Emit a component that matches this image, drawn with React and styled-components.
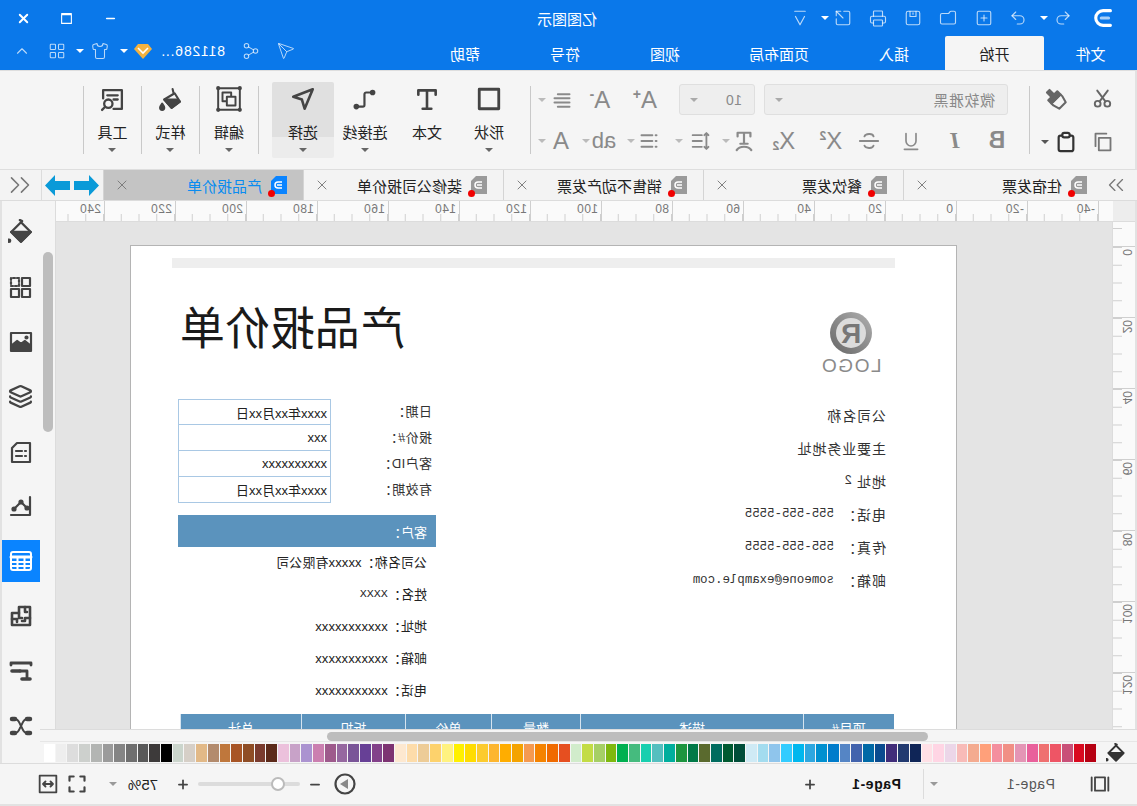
import React from "react";
import styled, { createGlobalStyle } from "styled-components";
import {
  Undo2, Redo2, SquarePlus, Folder, Printer, SquareArrowOutUpRight, Send, Share2, Shirt,
  LayoutGrid, ChevronUp, ChevronsLeft, ChevronsRight, X, Minus, Plus, Layers,
} from "lucide-react";

// la captura esta reflejada: todo se dibuja normal y el Frame voltea la pagina
const azul = "#0a78ea";
const fondoBarra = "#f5f5f5";
const azulTabla = "#5b93bd";
const sans = `"Liberation Sans", "Noto Sans CJK SC", sans-serif`;
const mono = `"Liberation Mono", "Noto Sans CJK SC", monospace`;

const Global = createGlobalStyle`
  html, body { margin: 0; padding: 0; background: #e2e2e2; overflow: hidden; }
  * { box-sizing: border-box; }
`;

const Frame = styled.div`
  width: 1137px;
  height: 806px;
  display: flex;
  flex-direction: column;
  overflow: hidden;
  transform: scaleX(-1);
  font-family: ${sans};
  color: #222;
  background: #e2e2e2;
`;

const Slot = styled.div`
  flex: none;
  width: ${p => p.$w || 18}px;
  margin-left: ${p => p.$ml || 0}px;
  display: flex;
  align-items: center;
  justify-content: center;
  color: ${p => p.$c || "inherit"};
`;

const Caret = styled.i`
  display: block;
  width: 0;
  height: 0;
  border-left: 4px solid transparent;
  border-right: 4px solid transparent;
  border-top: 4px solid ${p => p.$c || "#777"};
`;

const TitleBar = styled.div`
  height: 36px;
  flex: none;
  display: flex;
  align-items: center;
  background: ${azul};
  color: rgba(255,255,255,.72);
`;
const AppName = styled.div`
  width: 80px;
  margin-left: 184px;
  color: #fff;
  font-size: 15px;
  text-align: center;
  white-space: nowrap;
`;

const MenuBar = styled.div`
  height: 34px;
  flex: none;
  display: flex;
  align-items: center;
  background: ${azul};
  color: rgba(255,255,255,.72);
`;
const MenuTab = styled.div`
  width: ${p => p.$w}px;
  height: 34px;
  flex: none;
  display: flex;
  align-items: center;
  justify-content: center;
  font-size: 15px;
  color: ${p => (p.$active ? "#222" : "#fff")};
  background: ${p => (p.$active ? fondoBarra : "transparent")};
  border-radius: 2px 2px 0 0;
`;
const MenuTools = styled.div`
  display: flex;
  align-items: center;
  margin-bottom: 5px;
`;
const UserName = styled.div`
  width: 65px;
  margin-left: 17px;
  font-size: 14px;
  letter-spacing: .8px;
  color: #fff;
  white-space: nowrap;
`;

const Ribbon = styled.div`
  height: 100px;
  flex: none;
  display: flex;
  align-items: center;
  background: ${fondoBarra};
  border-left: 2px solid #e2e2e2;
  border-top: 1px solid #dedede;
  border-bottom: 1px solid #dedede;
`;
const Divider = styled.div`
  width: 1px;
  height: 68px;
  flex: none;
  background: #c9c9c9;
  margin-left: ${p => p.$ml || 0}px;
`;
const Clipboard = styled.div`
  width: 105px;
  flex: none;
  display: grid;
  grid-template-columns: 40px 1fr;
  grid-auto-rows: 31px;
  row-gap: 12px;
  padding-left: 12px;
  align-items: center;
  justify-items: center;
`;
const PasteCell = styled.div`
  display: flex;
  align-items: center;
  gap: 5px;
  margin-left: -6px;
`;
const FontGroup = styled.div`
  width: 498px;
  flex: none;
  padding-left: 21px;
  display: flex;
  flex-direction: column;
  gap: 10px;
`;
const FontRow = styled.div`
  height: 31px;
  display: flex;
  align-items: center;
  color: #8a8a8a;
`;
const Select = styled.div`
  width: ${p => p.$w}px;
  height: 31px;
  flex: none;
  margin-left: ${p => p.$ml || 0}px;
  display: flex;
  align-items: center;
  justify-content: space-between;
  padding: 0 10px 0 12px;
  font-size: ${p => p.$s || 15}px;
  letter-spacing: .5px;
  color: #8a8a8a;
  background: #eeeeee;
  border: 1px solid #dfdfdf;
  border-radius: 3px;
`;
const Glyph = styled.span`
  font-family: ${p => (p.$serif ? `"Liberation Serif", serif` : sans)};
  font-size: ${p => p.$s || 24}px;
  font-weight: ${p => (p.$b ? 700 : 400)};
  font-style: ${p => (p.$i ? "italic" : "normal")};
  line-height: 1;
  color: #8a8a8a;
`;
const Mark = styled.span`
  font-size: ${p => p.$s || 12}px;
  font-weight: 700;
  line-height: 1;
  margin-bottom: ${p => p.$up || 0}px;
  margin-top: ${p => p.$down || 0}px;
  color: #8a8a8a;
`;
const BigGroup = styled.div`
  display: flex;
  flex: none;
  margin-left: ${p => p.$ml || 0}px;
`;
const BigTool = styled.div`
  width: ${p => p.$w || 62}px;
  height: 76px;
  flex: none;
  display: flex;
  flex-direction: column;
  align-items: center;
  padding-top: 4px;
  border-radius: 2px;
  background: ${p => (p.$active ? "linear-gradient(#e0e0e0 55px, #ececec 55px)" : "transparent")};
`;
const BigIcon = styled.div`
  height: 26px;
  display: flex;
  align-items: center;
  justify-content: center;
  color: #444;
`;
const BigLabel = styled.div`
  margin-top: 12px;
  font-size: 15px;
  line-height: 18px;
  color: #222;
  white-space: nowrap;
`;
const BigCaret = styled.div`
  margin-top: 6px;
`;

const DocTabs = styled.div`
  height: 31px;
  flex: none;
  display: flex;
  align-items: stretch;
  background: #f3f3f3;
  border-bottom: 1px solid #dcdcdc;
`;
const DocEdge = styled.div`
  width: ${p => p.$w}px;
  flex: none;
  display: flex;
  align-items: center;
  justify-content: center;
  gap: 4px;
  padding-left: ${p => p.$pl || 0}px;
  color: #777;
  border-left: ${p => (p.$line ? "1px solid #dcdcdc" : "none")};
`;
const DocTab = styled.div`
  width: 200px;
  flex: none;
  display: flex;
  align-items: center;
  padding: 0 10px 0 16px;
  font-size: 15px;
  border-right: 1px solid #d4d4d4;
  color: ${p => (p.$active ? "#0a8cf0" : "#222")};
  background: ${p => (p.$active ? "#c4c4c4" : "transparent")};
`;
const DocIcon = styled.div`
  position: relative;
  width: 16px;
  height: 18px;
  flex: none;
  margin-right: 9px;
`;
const RedDot = styled.i`
  position: absolute;
  right: -3px;
  bottom: -3px;
  width: 7px;
  height: 7px;
  border-radius: 50%;
  background: #f00000;
`;
const CloseMark = styled.div`
  margin-left: auto;
  display: flex;
  color: #777;
`;

const Workspace = styled.div`
  flex: 1;
  min-height: 0;
  display: flex;
`;
const Center = styled.div`
  width: 1097px;
  flex: none;
  display: flex;
  flex-direction: column;
`;
const EditorRow = styled.div`
  flex: 1;
  min-height: 0;
  display: flex;
`;
const Editor = styled.div`
  width: 1081px;
  flex: none;
  display: grid;
  grid-template-columns: 22px 1fr;
  grid-template-rows: 21px 1fr;
  grid-template-areas: "corner hruler" "vruler canvas";
  padding-left: 2px;
`;
const Corner = styled.div`
  grid-area: corner;
  background: #ededed;
  border-bottom: 1px solid #dcdcdc;
`;
const HRuler = styled.div`
  grid-area: hruler;
  display: flex;
  overflow: hidden;
  padding-left: 14px;
  background: #fafafa;
  border-bottom: 1px solid #dcdcdc;
`;
const HMark = styled.div`
  width: 71px;
  flex: none;
  padding: 1px 0 0 3px;
  font-size: 12px;
  letter-spacing: .4px;
  line-height: 14px;
  color: #777;
  border-left: 1px solid #cfcfcf;
  background: linear-gradient(to right, #cfcfcf 1px, transparent 1px) left bottom / 17.75px 7px repeat-x;
`;
const VRuler = styled.div`
  grid-area: vruler;
  overflow: hidden;
  background: #fafafa;
`;
const VPad = styled.div`
  height: 24px;
  background: linear-gradient(#cfcfcf, #cfcfcf) right 6px / 9px 1px no-repeat;
`;
const VMark = styled.div`
  height: 71px;
  padding: 2px 0 0 3px;
  border-top: 1px solid #cfcfcf;
  background: linear-gradient(to bottom, #cfcfcf 1px, transparent 1px) right top / 9px 17.75px repeat-y;
`;
const VLabel = styled.div`
  writing-mode: vertical-rl;
  transform: rotate(180deg);
  font-size: 12px;
  line-height: 10px;
  color: #777;
`;
const Canvas = styled.div`
  grid-area: canvas;
  overflow: hidden;
  background: #e4e4e4;
  border-left: 1px solid #dcdcdc;
`;
const Sheet = styled.div`
  width: 827px;
  height: 900px;
  margin: 23px 0 0 155px;
  background: #fff;
  border: 1px solid #b4b4b4;
`;
const SheetBand = styled.div`
  height: 10px;
  margin: 12px 41px 0 61px;
  background: #eeeeee;
`;
const SheetColumns = styled.div`
  display: grid;
  grid-template-columns: 450px 258px;
  padding-left: 70px;
`;
const LogoBox = styled.div`
  margin: 42px 0 0 6px;
  width: 58px;
  display: flex;
  flex-direction: column;
  align-items: center;
`;
const LogoWord = styled.div`
  font-size: 19px;
  line-height: 20px;
  letter-spacing: 1.5px;
  color: #8a8a8a;
`;
const CompanyList = styled.div`
  margin-top: 22px;
  display: flex;
  flex-direction: column;
`;
const CompanyLine = styled.div`
  height: 33px;
  display: flex;
  align-items: center;
  font-size: 14px;
  letter-spacing: .9px;
  color: #333;
  white-space: nowrap;
`;
const CompanyKey = styled.span`
  width: ${p => p.$w || 52}px;
  flex: none;
`;
const MonoText = styled.span`
  font-family: ${mono};
  font-size: 12.4px;
  letter-spacing: 0;
`;
const BigX = styled.span`
  font-family: ${mono};
  font-size: 11.5px;
`;
const DocTitle = styled.h1`
  margin: 25px 0 0 31px;
  font-family: "Noto Sans CJK SC", sans-serif;
  font-size: 45px;
  line-height: 65px;
  font-weight: 400;
  color: #1a1a1a;
  white-space: nowrap;
`;
const InfoGrid = styled.div`
  margin-top: 41px;
  display: grid;
  grid-template-columns: 105px 153px;
  grid-auto-rows: 26px;
  font-size: 13px;
`;
const InfoKey = styled.div`
  padding: 0 0 4px 4px;
  display: flex;
  align-items: center;
  color: #333;
  letter-spacing: .4px;
`;
const InfoValue = styled.div`
  display: flex;
  align-items: center;
  padding-left: 3px;
  color: #222;
  border: 1px solid #a9c8e4;
  border-top: ${p => (p.$first ? "1px solid #a9c8e4" : "none")};
  background: #fff;
`;
const CustomerHead = styled.div`
  height: 32px;
  margin: 12px 0 -2px;
  padding-left: 9px;
  display: flex;
  align-items: center;
  font-size: 13px;
  color: #fff;
  background: ${azulTabla};
`;
const CustomerLine = styled.div`
  height: 32px;
  padding-left: 9px;
  display: flex;
  align-items: center;
  font-size: 13px;
  letter-spacing: .1px;
  color: #222;
  white-space: nowrap;
`;
const PriceTable = styled.div`
  margin: 9px 0 0 62px;
  width: 714px;
  display: grid;
  grid-template-columns: 91px 223px 89px 86px 104px 121px;
  height: 30px;
  background: ${azulTabla};
`;
const PriceHead = styled.div`
  border-right: 1px solid #d6e4ef;
  color: #fff;
  font-size: 13px;
  text-align: center;
  line-height: 30px;
`;

const VScroll = styled.div`
  width: 16px;
  flex: none;
  background: ${fondoBarra};
  border-left: 1px solid #dcdcdc;
  padding: 51px 0 0 2px;
`;
const VThumb = styled.div`
  width: 10px;
  height: 180px;
  border-radius: 5px;
  background: #bdbdbd;
`;
const HScroll = styled.div`
  height: 13px;
  flex: none;
  padding: 2px 0 0 209px;
  background: ${fondoBarra};
  border-top: 1px solid #dcdcdc;
  border-bottom: 1px solid #e6e6e6;
`;
const HThumb = styled.div`
  width: 601px;
  height: 9px;
  border-radius: 5px;
  background: #bdbdbd;
`;
const PaletteRow = styled.div`
  height: 21px;
  flex: none;
  display: flex;
  align-items: center;
  background: ${fondoBarra};
`;
const FillCell = styled.div`
  width: 41px;
  flex: none;
  display: flex;
  justify-content: center;
  color: #333;
`;
const Palette = styled.div`
  width: 1052px;
  flex: none;
  display: grid;
  grid-template-columns: repeat(90, 1fr);
  column-gap: 1px;
  height: 18px;
`;
const Swatch = styled.div`
  background: ${p => p.$c};
`;
const Sidebar = styled.div`
  width: 38px;
  flex: none;
  display: flex;
  flex-direction: column;
  gap: 12.9px;
  padding-top: 10px;
  margin-right: 2px;
  background: ${fondoBarra};
`;
const SideBtn = styled.div`
  height: 42px;
  flex: none;
  display: flex;
  align-items: center;
  justify-content: center;
  color: ${p => (p.$active ? "#fff" : "#444")};
  background: ${p => (p.$active ? "#0a84ff" : "transparent")};
`;

const StatusBar = styled.div`
  height: 41px;
  flex: none;
  display: flex;
  align-items: center;
  margin-bottom: 2px;
  color: #444;
  background: ${fondoBarra};
  border-top: 1px solid #dcdcdc;
`;
const PageName = styled.div`
  width: ${p => p.$w}px;
  flex: none;
  margin-left: ${p => p.$ml}px;
  font-size: 14px;
  letter-spacing: .6px;
  font-weight: ${p => (p.$b ? 700 : 400)};
  color: ${p => (p.$b ? "#111" : "#555")};
  white-space: nowrap;
`;
const StatusRule = styled.div`
  width: 1px;
  height: 30px;
  flex: none;
  margin-left: 6px;
  background: #dcdcdc;
`;
const Slider = styled.div`
  position: relative;
  width: 102px;
  height: 4px;
  flex: none;
  margin-left: 8px;
  border-radius: 2px;
  background: #dcdcdc;
`;
const SliderThumb = styled.i`
  position: absolute;
  left: 15px;
  top: -5px;
  width: 14px;
  height: 14px;
  border-radius: 50%;
  background: #fff;
  border: 2px solid #bbb;
`;
const Percent = styled.div`
  width: 31px;
  flex: none;
  margin-left: 18px;
  font-size: 15px;
  white-space: nowrap;
  color: #222;
`;

const Svg = ({ s = 24, children, sw = 2, w, fill = "none" }) => (
  <svg width={w || s} height={s} viewBox="0 0 24 24" fill={fill} stroke="currentColor"
    strokeWidth={sw} strokeLinecap="round" strokeLinejoin="round">
    {children}
  </svg>
);

const Logo = () => (
  <Svg s={22} sw={3.4}>
    <path d="M5 4h8a8 8 0 0 1 0 16H5" stroke="#fff" />
    <path d="M7 12h8" stroke="#a9d0f8" />
  </Svg>
);
const CustomIcon = () => (
  <Svg s={18} sw={1.6}><path d="M5 3h14M6 10l6 11 6-11" /></Svg>
);
const SaveIcon = () => (
  <Svg s={20} sw={1.5}>
    <rect x="3" y="3" width="18" height="18" rx="2.5" />
    <path d="M8 3v7h8V3M12 5v2" />
  </Svg>
);
const Diamond = () => (
  <svg width="18" height="16" viewBox="0 0 18 16">
    <path d="M4 1h10l4 5-9 10L0 6z" fill="#f4b23f" />
    <path d="M4 5l5 5 5-5" fill="none" stroke="#fff" strokeWidth="1.6" />
  </svg>
);
const Scissors = () => (
  <Svg s={21} sw={2.2}>
    <circle cx="6.5" cy="18" r="3.3" /><circle cx="17.5" cy="18" r="3.3" />
    <path d="M8.5 15.5L18 3M15.5 15.5L6 3" />
  </Svg>
);
const Painter = () => (
  <Svg s={22} sw={2.2}>
    <g transform="rotate(45 12 12)">
      <rect x="10" y="0" width="4" height="7" fill="currentColor" />
      <rect x="5" y="7" width="14" height="5" fill="currentColor" />
      <path d="M5 12h14v3l-2 7H7l-2-7z" />
    </g>
  </Svg>
);
const CopyIcon = () => (
  <Svg s={20} sw={2.2}>
    <rect x="3" y="7" width="14" height="15" />
    <path d="M8 2h13v15" />
  </Svg>
);
const Paste = () => (
  <Svg s={22} sw={2.4}>
    <rect x="4" y="5" width="16" height="17" rx="2" />
    <rect x="8" y="2" width="8" height="5" rx="2" fill="#f5f5f5" />
  </Svg>
);
const AlignIcon = () => (
  <Svg s={20} sw={2.4}><path d="M3 5h14M3 10h18M3 15h18M3 20h14" /></Svg>
);
const LineSpacing = () => (
  <Svg s={20} w={26} sw={2.2}><path d="M3 5l2.5-2.5L8 5M5.5 3v18M3 19l2.5 2.5L8 19M11 5h11M11 12h11M11 19h11" /></Svg>
);
const ListIcon = () => (
  <Svg s={20} sw={2.4}><path d="M3 5h1M3 12h1M3 19h1M8 5h13M8 12h13M8 19h13" /></Svg>
);
const TArc = () => (
  <Svg s={22} sw={2.4}><path d="M5 7V3h14v4M12 3v12M8 15h8M4 22c3-5 13-5 16 0" /></Svg>
);
const Strike = () => (
  <Svg s={22} sw={2}><path d="M17 7c-1-3-9-4-10 0M7 17c1 4 9 3 10 0M2 12h20" /></Svg>
);
const ShapeIcon = () => (
  <Svg s={26} sw={2.6}><rect x="3" y="3" width="18" height="18" /></Svg>
);
const TextIcon = () => (
  <Svg s={26} sw={2.4}><path d="M4 8V4h16v4M12 4v17M8 21h8" /></Svg>
);
const ConnectorIcon = () => (
  <Svg s={26} sw={2}>
    <path d="M19 19h-5a1.5 1.5 0 0 1-1.5-1.5v-10A1.5 1.5 0 0 0 11 6H8" />
    <circle cx="20" cy="19" r="1.6" fill="currentColor" />
    <circle cx="5" cy="6" r="1.6" fill="currentColor" />
  </Svg>
);
const PointerIcon = () => (
  <Svg s={26} sw={2.4}><path d="M3 3l18 7-8 2.5L10.500 21z" /></Svg>
);
const EditIcon = () => (
  <Svg s={26} sw={1.8}>
    <rect x="2" y="2" width="20" height="20" />
    <rect x="10" y="6" width="8" height="8" />
    <rect x="6" y="10" width="8" height="8" fill="#f5f5f5" />
    <g fill="#f5f5f5"><circle cx="2" cy="2" r="1" /><circle cx="22" cy="2" r="1" /><circle cx="2" cy="22" r="1" /><circle cx="22" cy="22" r="1" /></g>
  </Svg>
);
const StyleIcon = () => (
  <Svg s={25} sw={2}>
    <path d="M10 2l-1 4M8 6l-5 8 8 6 7-8z" />
    <path d="M3 14l8 6 7-8H6z" fill="currentColor" />
    <path d="M20 16c1.500 2 2 3 2 4a2 2 0 0 1-4 0c0-1 .5-2 2-4z" fill="currentColor" />
  </Svg>
);
const ToolIcon = () => (
  <Svg s={25} sw={2.2}>
    <path d="M11 21H3V3h18v8" />
    <path d="M7 8h10M7 12h4" />
    <circle cx="16" cy="16" r="4" />
    <path d="M19 19l3 3" />
  </Svg>
);
const NavArrow = ({ dir }) => (
  <svg width="25" height="21" viewBox="0 0 25 21" fill="#0a9ad8">
    <path d={dir === "left" ? "M0 10.500L10 0v6h15v9H10v6z" : "M25 10.500L15 0v6H0v9h15v6z"} />
  </svg>
);
const PageGlyph = ({ active }) => (
  <svg width="16" height="18" viewBox="0 0 16 18">
    <path d="M0 0h11l5 5v13H0z" fill={active ? "#0a84ff" : "#9a9a9a"} />
    <path d="M5 6h4a3 3 0 0 1 0 6H5M5 9h5" fill="none" stroke="#fff" strokeWidth="1.5" />
  </svg>
);
const BucketSide = ({ s = 26 }) => (
  <Svg s={s} sw={2.2}>
    <path d="M12 3l9 9-9 9-9-9z" />
    <path d="M3 12h18l-9 9z" fill="currentColor" />
    <path d="M11 2l2-1" />
    <circle cx="23" cy="20" r="1" fill="currentColor" />
  </Svg>
);
const ShapesSide = () => (
  <Svg s={24} sw={2.2}>
    <rect x="3" y="3" width="8" height="8" />
    <rect x="14" y="3" width="8" height="8" strokeDasharray="2 2" />
    <rect x="3" y="14" width="8" height="8" />
    <rect x="14" y="14" width="8" height="8" />
  </Svg>
);
const ImageSide = () => (
  <Svg s={24} sw={2.2}>
    <rect x="2" y="3" width="20" height="18" />
    <path d="M3 20v-5l5-4 4 3 4-3 5 4v5z" fill="currentColor" />
    <circle cx="6.500" cy="7.500" r="1" fill="currentColor" />
  </Svg>
);
const NoteSide = () => (
  <Svg s={24} sw={2.2}>
    <path d="M3 3h13l5 5v14H3z" />
    <path d="M7 11h1M11 11h6M7 16h1M11 16h6" />
  </Svg>
);
const ChartSide = () => (
  <Svg s={24} sw={2.2}>
    <path d="M3 3v18h19" />
    <path d="M6 14l6-6 7 7" />
    <circle cx="12" cy="8" r="1.500" fill="currentColor" />
    <circle cx="19" cy="15" r="1.500" fill="currentColor" />
    <circle cx="6" cy="14" r="1.500" fill="currentColor" />
  </Svg>
);
const TableSide = () => (
  <Svg s={24} sw={2}>
    <rect x="2" y="3" width="20" height="18" rx="2" />
    <path d="M2 8h20" strokeWidth="3" />
    <path d="M2 13h20M2 17h20M8.500 9v12M15.500 9v12" />
  </Svg>
);
const PuzzleSide = () => (
  <Svg s={24} sw={2.6}>
    <path d="M3 3h11v6h7v12H3z" />
    <path d="M8 3v5h-2M3 14h5v3h3M14 9v5h-3M21 15h-5v3" />
  </Svg>
);
const GanttSide = () => (
  <Svg s={24} sw={2.8}>
    <path d="M2 6V4h20v2" />
    <path d="M13 12h8" strokeWidth="3.6" />
    <path d="M13 12H6v7" />
    <path d="M3 20h8" strokeWidth="3.6" />
  </Svg>
);
const MapSide = () => (
  <Svg s={24} sw={2}>
    <path d="M6 5c4 0 4 4 6 7s2 7 6 7M18 5c-4 0-4 4-6 7s-2 7-6 7" />
    <path d="M3 5h3M18 5h3M3 19h3M18 19h3" strokeWidth="4.500" />
  </Svg>
);
const PageView = () => (
  <Svg s={20} w={28} sw={2.2}>
    <rect x="6" y="4" width="12" height="16" />
    <path d="M2 4v16M22 4v16" />
  </Svg>
);
const PlayCircle = () => (
  <svg width="22" height="22" viewBox="0 0 22 22">
    <circle cx="11" cy="11" r="9.500" fill="none" stroke="#444" strokeWidth="2.200" />
    <path d="M8 6l8 5-8 5z" fill="#888" />
  </svg>
);
const FullScreen = () => (
  <Svg s={20} sw={2.6}><path d="M3 8V3h5M16 3h5v5M21 16v5h-5M8 21H3v-5" /></Svg>
);
const FitWidth = () => (
  <Svg s={20} sw={2.2}>
    <rect x="2" y="2" width="20" height="20" />
    <path d="M6 12h12M9 9l-3 3 3 3M15 9l3 3-3 3" />
  </Svg>
);

const docTabs = ["住宿发票", "餐饮发票", "销售不动产发票", "装修公司报价单", "产品报价单"];
const hMarks = [-40, -20, 0, 20, 40, 60, 80, 100, 120, 140, 160, 180, 200, 220, 240];
const vMarks = [0, 20, 40, 60, 80, 100, 120];
const sideIcons = [BucketSide, ShapesSide, ImageSide, () => <Layers size={25} strokeWidth={2.2} />, NoteSide, ChartSide, TableSide, PuzzleSide, GanttSide, MapSide];

const colores = `#ffffff #eeeeee #dddddd #cdd0cd #b3b5b3 #9b9b9b #858585 #6f6f6f #595959 #3d3a3a #000000 #cbd5cc #d6cfc7 #e2b987 #b38b6d
#bf773c #a85526 #8f4d25 #7a3b2e #5c2a1a #ecc1dc #c8a2c8 #ab93d0 #cb7fb0 #9e5a8c #9668a0 #7a5598 #674096 #83418a #7d3372
#fde8d0 #fddcaa #edcc97 #fdd26c #fff280 #fff000 #ffdc00 #fccb2e #fdb62f #ffad00 #f4a300 #f59a50 #f58300 #f06a00 #e64f20
#d1eccb #c3dc45 #a6cf65 #7fb80e #00b050 #45bb7e #18cfaf #55bfbf #00ae9d #1d953f #007947 #5a6a2e #006c5f #005a31 #004d39
#cfeaf5 #a3dcef #8fc5ec #33ccff #00b7ee #2ea7e0 #0090d0 #007ccb #5585c5 #4263ad #0069a6 #0a4b8f #412d7a #223a70 #0f2557
#ffe0e6 #ffd5e4 #ecd6e8 #f8bbb8 #f4ab90 #ffa07a #f48f9e #f18f85 #e495b5 #e9609b #ef7070 #ee5565 #c95078 #d90a1f #b60012`
  .split(/\s+/)
  .reverse();

const infoRows = [
  ["日期：", "xxxx年xx月xx日"],
  ["报价#：", "xxx"],
  ["客户ID：", "xxxxxxxxxx"],
  ["有效期：", "xxxx年xx月xx日"],
];
const clienteRows = [
  ["公司名称：", "xxxxx有限公司"],
  ["姓名：", <BigX key="n">XXXX</BigX>],
  ["地址：", "xxxxxxxxxxx"],
  ["邮箱：", "xxxxxxxxxxx"],
  ["电话：", "xxxxxxxxxxx"],
];

export default function App() {
  return (
    <Frame>
      <Global />
      <TitleBar>
        <Slot $w={22} $ml={22}><Logo /></Slot>
        <Slot $ml={21}><Undo2 size={20} strokeWidth={1.5} /></Slot>
        <Slot $w={8} $ml={6}><Caret $c="#fff" /></Slot>
        <Slot $ml={13}><Redo2 size={20} strokeWidth={1.5} /></Slot>
        <Slot $ml={16}><SquarePlus size={20} strokeWidth={1.5} /></Slot>
        <Slot $ml={18}><Folder size={20} strokeWidth={1.5} /></Slot>
        <Slot $ml={17}><SaveIcon /></Slot>
        <Slot $ml={17}><Printer size={21} strokeWidth={1.5} /></Slot>
        <Slot $ml={17}><SquareArrowOutUpRight size={20} strokeWidth={1.5} /></Slot>
        <Slot $w={8} $ml={5}><Caret $c="#fff" /></Slot>
        <Slot $ml={12}><CustomIcon /></Slot>
        <AppName>亿图图示</AppName>
        <Slot $ml={407} $c="#fff"><Minus size={13} strokeWidth={3} /></Slot>
        <Slot $ml={26} $c="#fff"><Svg s={13} sw={2}><path d="M3 3h18v18H3zM3 5h18" /></Svg></Slot>
        <Slot $ml={25} $c="#fff"><X size={15} strokeWidth={3} /></Slot>
      </TitleBar>

      <MenuBar>
        <MenuTab $w={93}>文件</MenuTab>
        <MenuTab $w={99} $active>开始</MenuTab>
        <MenuTab $w={102}>插入</MenuTab>
        <MenuTab $w={128}>页面布局</MenuTab>
        <MenuTab $w={100}>视图</MenuTab>
        <MenuTab $w={100}>符号</MenuTab>
        <MenuTab $w={100}>帮助</MenuTab>
        <MenuTools>
          <Slot $ml={120}><Send size={20} strokeWidth={1.3} /></Slot>
          <Slot $ml={17}><Share2 size={20} strokeWidth={1.4} /></Slot>
          <UserName>811286...</UserName>
          <Slot $ml={8}><Diamond /></Slot>
          <Slot $w={8} $ml={6}><Caret $c="#fff" /></Slot>
          <Slot $ml={11}><Shirt size={20} strokeWidth={1.4} /></Slot>
          <Slot $w={8} $ml={7}><Caret $c="#fff" /></Slot>
          <Slot $ml={10}><LayoutGrid size={20} strokeWidth={1.4} /></Slot>
          <Slot $ml={17}><ChevronUp size={20} strokeWidth={1.5} /></Slot>
        </MenuTools>
      </MenuBar>

      <Ribbon>
        <Clipboard>
          <Slot $w={30} $c="#666"><Scissors /></Slot>
          <Slot $w={30} $c="#666"><Painter /></Slot>
          <Slot $w={30} $c="#777"><CopyIcon /></Slot>
          <PasteCell>
            <Slot $w={24} $c="#333"><Paste /></Slot>
            <Caret $c="#555" />
          </PasteCell>
        </Clipboard>
        <Divider />
        <FontGroup>
          <FontRow>
            <Select $w={244}>微软雅黑<Caret $c="#aaa" /></Select>
            <Select $w={76} $ml={9} $s={14}>10<Caret $c="#aaa" /></Select>
            <Slot $w={30} $ml={19}><Glyph>A</Glyph><Mark $up={12} $s={14}>+</Mark></Slot>
            <Slot $w={30} $ml={15}><Glyph>A</Glyph><Mark $up={12} $s={14}>-</Mark></Slot>
            <Slot $w={22} $ml={12}><AlignIcon /></Slot>
            <Slot $w={8} $ml={5}><Caret $c="#bbb" /></Slot>
          </FontRow>
          <FontRow>
            <Slot $w={22}><Glyph $b $s={23}>B</Glyph></Slot>
            <Slot $w={22} $ml={20}><Glyph $serif $i $b $s={23}>I</Glyph></Slot>
            <Slot $w={22} $ml={22}><Svg s={20} sw={2}><path d="M6 3v9a6 6 0 0 0 12 0V3M4 22h16" /></Svg></Slot>
            <Slot $w={22} $ml={20}><Strike /></Slot>
            <Slot $w={28} $ml={13}><Glyph>X</Glyph><Mark $up={10}>2</Mark></Slot>
            <Slot $w={28} $ml={19}><Glyph>X</Glyph><Mark $down={10}>2</Mark></Slot>
            <Slot $w={22} $ml={15}><TArc /></Slot>
            <Slot $w={8} $ml={3}><Caret $c="#bbb" /></Slot>
            <Slot $w={26} $ml={8}><LineSpacing /></Slot>
            <Slot $w={8} $ml={5}><Caret $c="#bbb" /></Slot>
            <Slot $w={24} $ml={14}><ListIcon /></Slot>
            <Slot $w={8} $ml={2}><Caret $c="#bbb" /></Slot>
            <Slot $w={26} $ml={10}><Glyph $s={22}>ab</Glyph></Slot>
            <Slot $w={8} $ml={1}><Caret $c="#bbb" /></Slot>
            <Slot $w={22} $ml={10}><Glyph>A</Glyph></Slot>
            <Slot $w={8} $ml={4}><Caret $c="#bbb" /></Slot>
          </FontRow>
        </FontGroup>
        <Divider />
        <BigGroup $ml={10}>
          <BigTool><BigIcon><ShapeIcon /></BigIcon><BigLabel>形状</BigLabel><BigCaret><Caret $c="#666" /></BigCaret></BigTool>
          <BigTool><BigIcon><TextIcon /></BigIcon><BigLabel>文本</BigLabel></BigTool>
          <BigTool><BigIcon><ConnectorIcon /></BigIcon><BigLabel>连接线</BigLabel><BigCaret><Caret $c="#666" /></BigCaret></BigTool>
          <BigTool $active><BigIcon><PointerIcon /></BigIcon><BigLabel>选择</BigLabel><BigCaret><Caret $c="#666" /></BigCaret></BigTool>
        </BigGroup>
        <Divider $ml={13} />
        <BigGroup>
          <BigTool $w={58}><BigIcon><EditIcon /></BigIcon><BigLabel>编辑</BigLabel><BigCaret><Caret $c="#666" /></BigCaret></BigTool>
        </BigGroup>
        <Divider />
        <BigGroup>
          <BigTool $w={57}><BigIcon><StyleIcon /></BigIcon><BigLabel>样式</BigLabel><BigCaret><Caret $c="#666" /></BigCaret></BigTool>
        </BigGroup>
        <Divider />
        <BigGroup>
          <BigTool $w={57}><BigIcon><ToolIcon /></BigIcon><BigLabel>工具</BigLabel><BigCaret><Caret $c="#666" /></BigCaret></BigTool>
        </BigGroup>
        <Divider />
      </Ribbon>

      <DocTabs>
        <DocEdge $w={34} $pl={8}><ChevronsRight size={26} strokeWidth={1.2} /></DocEdge>
        {docTabs.map((nombre, i) => (
          <DocTab key={nombre} $active={i === 4}>
            <DocIcon><PageGlyph active={i === 4} /><RedDot /></DocIcon>
            {nombre}
            <CloseMark><X size={16} strokeWidth={1.4} /></CloseMark>
          </DocTab>
        ))}
        <DocEdge $w={61}>
          <NavArrow dir="left" />
          <NavArrow dir="right" />
        </DocEdge>
        <DocEdge $w={42} $line><ChevronsLeft size={34} strokeWidth={1.1} /></DocEdge>
      </DocTabs>

      <Workspace>
        <Center>
          <EditorRow>
            <Editor>
              <Corner />
              <HRuler>
                {hMarks.map(n => <HMark key={n}>{n}</HMark>)}
              </HRuler>
              <VRuler>
                <VPad />
                {vMarks.map(n => <VMark key={n}><VLabel>{n}</VLabel></VMark>)}
              </VRuler>
              <Canvas>
                <Sheet>
                  <SheetBand />
                  <SheetColumns>
                    <div>
                      <LogoBox>
                        <svg width="46" height="46" viewBox="0 0 46 46">
                          <defs>
                            <linearGradient id="aro" x1="0" y1="0" x2="1" y2="1">
                              <stop offset="0" stopColor="#b0b0b0" />
                              <stop offset="1" stopColor="#666" />
                            </linearGradient>
                          </defs>
                          <circle cx="23" cy="23" r="21" fill="url(#aro)" />
                          <circle cx="23" cy="23" r="15" fill="#dcdcdc" />
                          <text x="23" y="33" textAnchor="middle" fontSize="28" fontWeight="700" fill="#777" fontFamily={sans}>R</text>
                        </svg>
                        <LogoWord>LOGO</LogoWord>
                      </LogoBox>
                      <CompanyList>
                        <CompanyLine>公司名称</CompanyLine>
                        <CompanyLine>主要业务地址</CompanyLine>
                        <CompanyLine><CompanyKey $w={34}>地址</CompanyKey><MonoText>2</MonoText></CompanyLine>
                        <CompanyLine><CompanyKey>电话：</CompanyKey><MonoText>555-555-5555</MonoText></CompanyLine>
                        <CompanyLine><CompanyKey>传真：</CompanyKey><MonoText>555-555-5555</MonoText></CompanyLine>
                        <CompanyLine><CompanyKey>邮箱：</CompanyKey><MonoText>someone@example.com</MonoText></CompanyLine>
                      </CompanyList>
                    </div>
                    <div>
                      <DocTitle>产品报价单</DocTitle>
                      <InfoGrid>
                        {infoRows.map(([k, v], i) => (
                          <React.Fragment key={k}>
                            <InfoKey>{k}</InfoKey>
                            <InfoValue $first={i === 0}>{v}</InfoValue>
                          </React.Fragment>
                        ))}
                      </InfoGrid>
                      <CustomerHead>客户：</CustomerHead>
                      {clienteRows.map(([k, v]) => (
                        <CustomerLine key={k}>{k}{v}</CustomerLine>
                      ))}
                    </div>
                  </SheetColumns>
                  <PriceTable>
                    <PriceHead>项目#</PriceHead>
                    <PriceHead>描述</PriceHead>
                    <PriceHead>数量</PriceHead>
                    <PriceHead>单价</PriceHead>
                    <PriceHead>折扣</PriceHead>
                    <PriceHead>总计</PriceHead>
                  </PriceTable>
                </Sheet>
              </Canvas>
            </Editor>
            <VScroll><VThumb /></VScroll>
          </EditorRow>
          <HScroll><HThumb /></HScroll>
          <PaletteRow>
            <FillCell><BucketSide s={20} /></FillCell>
            <Palette>
              {colores.map((c, i) => <Swatch key={i} $c={c} />)}
            </Palette>
          </PaletteRow>
        </Center>
        <Sidebar>
          {sideIcons.map((Icono, i) => (
            <SideBtn key={i} $active={i === 6}><Icono /></SideBtn>
          ))}
        </Sidebar>
      </Workspace>

      <StatusBar>
        <Slot $w={28} $ml={23}><PageView /></Slot>
        <PageName $w={48} $ml={31}>Page-1</PageName>
        <Slot $w={8} $ml={69}><Caret $c="#999" /></Slot>
        <StatusRule />
        <PageName $w={50} $ml={22} $b>Page-1</PageName>
        <Slot $w={14} $ml={34}><Plus size={15} strokeWidth={3} /></Slot>
        <Slot $w={22} $ml={447}><PlayCircle /></Slot>
        <Slot $w={14} $ml={12}><Minus size={15} strokeWidth={3} /></Slot>
        <Slider><SliderThumb /></Slider>
        <Slot $w={14} $ml={8}><Plus size={15} strokeWidth={3} /></Slot>
        <Percent>75%</Percent>
        <Slot $w={8} $ml={10}><Caret $c="#999" /></Slot>
        <Slot $w={20} $ml={22}><FullScreen /></Slot>
        <Slot $w={20} $ml={9}><FitWidth /></Slot>
      </StatusBar>
    </Frame>
  );
}
